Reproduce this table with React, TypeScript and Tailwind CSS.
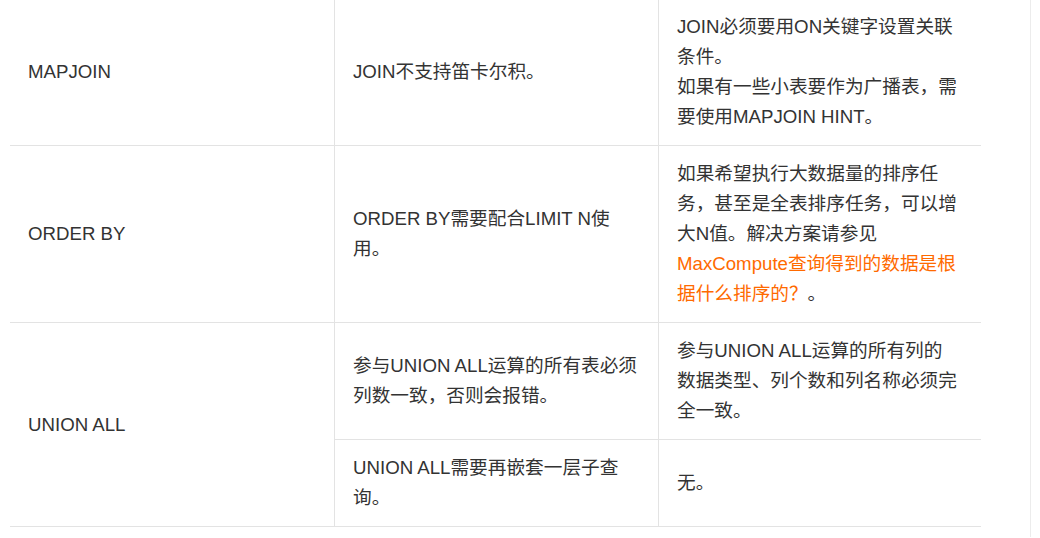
import React from "react";

const cell =
  "flex items-center border-b border-[#e3e3e3] py-[13px] pl-[18px]";

export default function App() {
  return (
    <div className="w-[1040px] h-[538px] overflow-hidden bg-white font-['Liberation_Sans','Noto_Sans_CJK_SC',sans-serif] text-[18.67px] leading-[30px] text-[#333]">
      <div className="w-[1031px] h-full border-r border-[#ececec] pl-[10px]">
        <div className="grid grid-cols-[325px_324px_322px] -mt-px">
          {/* MAPJOIN */}
          <div className={`${cell} pr-[18px] border-r`}>MAPJOIN</div>
          <div className={`${cell} pr-[18px] border-r`}>JOIN不支持笛卡尔积。</div>
          <div className={`${cell} pr-[22px]`}>
            <div>
              <p>JOIN必须要用ON关键字设置关联条件。</p>
              <p>如果有一些小表要作为广播表，需要使用MAPJOIN HINT。</p>
            </div>
          </div>

          {/* ORDER BY */}
          <div className={`${cell} pr-[18px] border-r`}>ORDER BY</div>
          <div className={`${cell} pr-[18px] border-r`}>
            ORDER BY需要配合LIMIT N使用。
          </div>
          <div className={`${cell} pr-[22px]`}>
            <p>
              如果希望执行大数据量的排序任务，甚至是全表排序任务，可以增大N值。解决方案请参见
              <a className="text-[#ff6a00]">
                MaxCompute查询得到的数据是根据什么排序的？
              </a>
              。
            </p>
          </div>

          {/* UNION ALL */}
          <div className={`${cell} pr-[18px] border-r row-span-2`}>UNION ALL</div>
          <div className={`${cell} pr-[18px] border-r`}>
            参与UNION ALL运算的所有表必须列数一致，否则会报错。
          </div>
          <div className={`${cell} pr-[22px]`}>
            参与UNION ALL运算的所有列的数据类型、列个数和列名称必须完全一致。
          </div>
          <div className={`${cell} pr-[18px] border-r`}>
            UNION ALL需要再嵌套一层子查询。
          </div>
          <div className={`${cell} pr-[22px]`}>无。</div>
        </div>
      </div>
    </div>
  );
}
